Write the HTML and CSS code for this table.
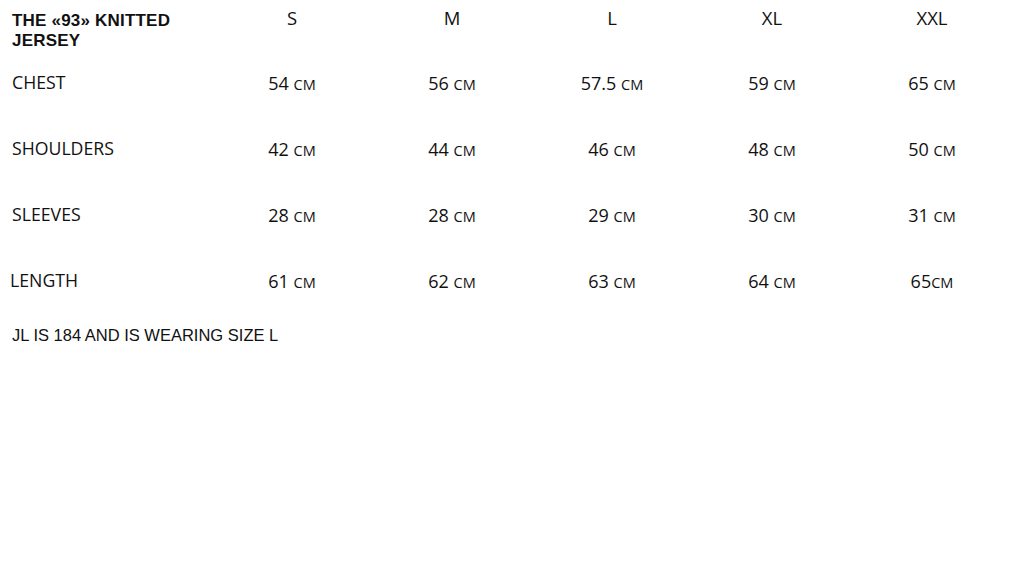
FILE: index.html
```html
<!DOCTYPE html>
<html lang="en">
<head>
<meta charset="utf-8">
<title>Size guide</title>
<link rel="stylesheet" href="styles.css">
</head>
<body>
<div class="page">
  <div class="head">
    <div class="title">THE «93» KNITTED<br>JERSEY</div>
    <div class="size">S</div>
    <div class="size">M</div>
    <div class="size">L</div>
    <div class="size">XL</div>
    <div class="size">XXL</div>
  </div>
  <div class="table">
    <div class="label">CHEST</div>
    <div class="val">54 <span class="unit">cm</span></div>
    <div class="val">56 <span class="unit">cm</span></div>
    <div class="val">57.5 <span class="unit">cm</span></div>
    <div class="val">59 <span class="unit">cm</span></div>
    <div class="val">65 <span class="unit">cm</span></div>

    <div class="label">SHOULDERS</div>
    <div class="val">42 <span class="unit">cm</span></div>
    <div class="val">44 <span class="unit">cm</span></div>
    <div class="val">46 <span class="unit">cm</span></div>
    <div class="val">48 <span class="unit">cm</span></div>
    <div class="val">50 <span class="unit">cm</span></div>

    <div class="label">SLEEVES</div>
    <div class="val">28 <span class="unit">cm</span></div>
    <div class="val">28 <span class="unit">cm</span></div>
    <div class="val">29 <span class="unit">cm</span></div>
    <div class="val">30 <span class="unit">cm</span></div>
    <div class="val">31 <span class="unit">cm</span></div>

    <div class="label label-shift">LENGTH</div>
    <div class="val">61 <span class="unit">cm</span></div>
    <div class="val">62 <span class="unit">cm</span></div>
    <div class="val">63 <span class="unit">cm</span></div>
    <div class="val">64 <span class="unit">cm</span></div>
    <div class="val">65<span class="unit">cm</span></div>
  </div>
  <p class="note">JL IS 184 AND IS WEARING SIZE L</p>
</div>
</body>
</html>
```
FILE: styles.css
```css
html, body {
  margin: 0;
  padding: 0;
  background: #fff;
  color: #111;
}
.page {
  width: 1024px;
  height: 576px;
}
.head {
  display: grid;
  grid-template-columns: 212px repeat(5, 160px);
  align-items: start;
  height: 70px;
  padding-top: 6px;
  box-sizing: border-box;
}
.title {
  font-family: "Liberation Sans", Arial, sans-serif;
  font-weight: bold;
  font-size: 17px;
  letter-spacing: 0.2px;
  line-height: 20px;
  padding-left: 12px;
  padding-top: 5px;
}
.size {
  font-family: "Open Sans", sans-serif;
  font-size: 18.5px;
  line-height: 24px;
  text-align: center;
}
.table {
  display: grid;
  grid-template-columns: 212px repeat(5, 160px);
  grid-auto-rows: 24px;
  row-gap: 42px;
  align-items: center;
}
.label {
  font-family: "Open Sans", sans-serif;
  font-size: 17.7px;
  line-height: 24px;
  padding-left: 12px;
}
.label-shift {
  padding-left: 10px;
}
.val {
  font-family: "Open Sans", sans-serif;
  font-size: 18px;
  line-height: 24px;
  text-align: center;
  padding-top: 3px;
}
.unit {
  text-transform: uppercase;
  font-size: 14.5px;
}
.note {
  margin: 33px 0 0 12px;
  font-family: "Liberation Sans", Arial, sans-serif;
  font-size: 16.5px;
  line-height: 20px;
}
```
